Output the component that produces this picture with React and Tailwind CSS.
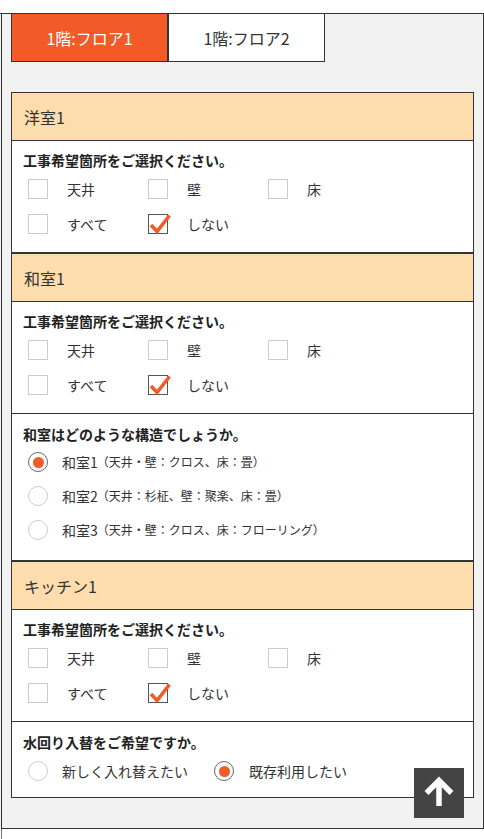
import React from "react";

const Check = ({ checked }) => (
  <span
    className={`relative block w-5 h-5 shrink-0 border bg-white ${
      checked ? "border-[#555]" : "border-[#ccc]"
    }`}
  >
    {checked && (
      <svg
        className="absolute left-0 top-0 overflow-visible"
        width="22"
        height="20"
        viewBox="0 0 22 20"
      >
        <polyline
          points="2,10 8,16.5 20.5,0.5"
          fill="none"
          stroke="#f25a27"
          strokeWidth="3.6"
        />
      </svg>
    )}
  </span>
);

const Radio = ({ checked }) => (
  <span
    className={`flex items-center justify-center w-5 h-5 shrink-0 rounded-full border bg-white ${
      checked ? "border-[#666]" : "border-[#ccc]"
    }`}
  >
    {checked && <span className="block w-[11px] h-[11px] rounded-full bg-[#f25a27]" />}
  </span>
);

const Question = ({ children }) => (
  <p className="h-5 leading-5 text-[14px] font-bold text-[#222] pl-[11px]">{children}</p>
);

const PlaceChoice = () => {
  const items = [
    { label: "天井", checked: false },
    { label: "壁", checked: false },
    { label: "床", checked: false },
    { label: "すべて", checked: false },
    { label: "しない", checked: true },
  ];
  return (
    <div className="pt-[9px] pb-[18px]">
      <Question>工事希望箇所をご選択ください。</Question>
      <div className="mt-[9px] pl-[16px] grid grid-cols-[120px_120px_120px] gap-y-[15px]">
        {items.map((it) => (
          <div key={it.label} className="flex items-center h-5">
            <Check checked={it.checked} />
            <span className="ml-[19px] text-[14px] leading-5 text-[#333]">{it.label}</span>
          </div>
        ))}
      </div>
    </div>
  );
};

const Header = ({ title }) => (
  <div className="h-[48px] bg-[#fddcae] border-b border-[#333] flex items-center pl-[12px] text-[16px] text-[#333]">
    {title}
  </div>
);

const WashitsuType = () => {
  const opts = [
    { main: "和室1", sub: "（天井・壁：クロス、床：畳）", checked: true },
    { main: "和室2", sub: "（天井：杉柾、壁：聚楽、床：畳）", checked: false },
    { main: "和室3", sub: "（天井・壁：クロス、床：フローリング）", checked: false },
  ];
  return (
    <div className="border-t border-[#333] pt-[10px] pb-[20px]">
      <Question>和室はどのような構造でしょうか。</Question>
      <div className="mt-[8px] pl-[16px] flex flex-col gap-[14px]">
        {opts.map((o) => (
          <div key={o.main} className="flex items-center h-5 text-[#333]">
            <Radio checked={o.checked} />
            <span className="ml-[14px] text-[14px] leading-5">{o.main}</span>
            <span className="text-[12px] leading-5 ml-[-1px]">{o.sub}</span>
          </div>
        ))}
      </div>
    </div>
  );
};

const WaterChoice = () => (
  <div className="border-t border-[#333] pt-[10px] pb-[16px]">
    <Question>水回り入替をご希望ですか。</Question>
    <div className="mt-[9px] pl-[16px] flex items-center h-5 text-[#333] text-[14px]">
      <div className="w-[186px] flex items-center">
        <Radio checked={false} />
        <span className="ml-[14px] leading-5">新しく入れ替えたい</span>
      </div>
      <div className="flex items-center">
        <Radio checked={true} />
        <span className="ml-[15px] leading-5">既存利用したい</span>
      </div>
    </div>
  </div>
);

export default function App() {
  const rooms = [
    { title: "洋室1", extra: null },
    { title: "和室1", extra: <WashitsuType /> },
    { title: "キッチン1", extra: <WaterChoice /> },
  ];

  return (
    <div
      className="relative w-[484px] h-[839px] overflow-hidden bg-white"
      style={{ fontFamily: '"Noto Sans CJK JP", "Noto Sans", sans-serif' }}
    >
      <div className="h-[13px] bg-white" />
      <div className="border-t border-[#333] bg-[#f2f2f2] pl-[1px]">
        <div className="border-l border-r border-b border-[#333] pb-[30px]">
          <div className="flex pl-[9px]">
            <button className="w-[157px] h-[48px] bg-[#f25a27] border-x border-b border-[#333] text-white text-[16px]">
              1階:フロア1
            </button>
            <button className="w-[157px] h-[48px] bg-white border-x border-b border-[#333] text-[#333] text-[16px]">
              1階:フロア2
            </button>
          </div>

          <div className="mt-[30px] ml-[9px] w-[463px] border border-[#333] bg-white">
            {rooms.map((r, i) => (
              <div key={r.title} className={i > 0 ? "border-t-2 border-[#333]" : ""}>
                <Header title={r.title} />
                <PlaceChoice />
                {r.extra}
              </div>
            ))}
          </div>
        </div>
      </div>
      <div className="h-[20px] bg-white ml-[1px] border-l border-[#777]" />

      <button className="absolute left-[414px] top-[768px] w-[50px] h-[50px] bg-[#444] flex items-center justify-center">
        <svg width="50" height="50" viewBox="0 0 50 50">
          <line x1="25" y1="38" x2="25" y2="14" stroke="#fff" strokeWidth="5.5" />
          <polyline
            points="12.5,25 25,12.5 37.5,25"
            fill="none"
            stroke="#fff"
            strokeWidth="5.5"
          />
        </svg>
      </button>
    </div>
  );
}
